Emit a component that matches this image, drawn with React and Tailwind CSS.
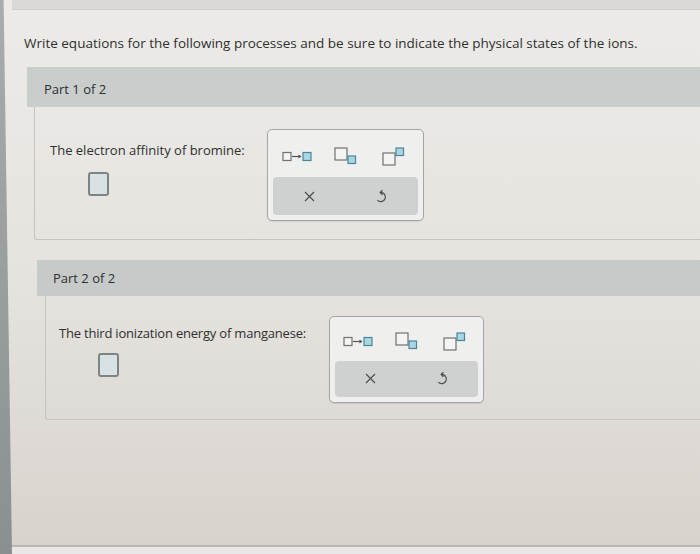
import React from "react";

const font = { fontFamily: '"Open Sans", "Noto Sans", Arial, sans-serif' };

function ArrowIcon() {
  return (
    <svg width="31" height="11" viewBox="0 0 31 11">
      <rect x="1" y="1.5" width="8" height="8" fill="#f4f4f2" stroke="#6d7272" strokeWidth="1.2" />
      <line x1="10" y1="5.5" x2="19" y2="5.5" stroke="#555" strokeWidth="1.2" />
      <path d="M16.5 3.5 L19.5 5.5 L16.5 7.5 Z" fill="#555" />
      <rect x="21" y="1.5" width="8" height="8" fill="#a8d6e4" stroke="#4d8595" strokeWidth="1.2" />
    </svg>
  );
}

function SubIcon() {
  return (
    <svg width="23" height="19" viewBox="0 0 23 19">
      <rect x="1" y="1" width="12" height="12" fill="#f4f4f2" stroke="#6d7272" strokeWidth="1.2" />
      <rect x="14" y="9" width="7.5" height="7.5" fill="#a8d6e4" stroke="#4d8595" strokeWidth="1.2" />
    </svg>
  );
}

function SupIcon() {
  return (
    <svg width="23" height="19" viewBox="0 0 23 19">
      <rect x="1" y="6" width="12" height="12" fill="#f4f4f2" stroke="#6d7272" strokeWidth="1.2" />
      <rect x="14" y="1" width="7.5" height="7.5" fill="#a8d6e4" stroke="#4d8595" strokeWidth="1.2" />
    </svg>
  );
}

function XIcon() {
  return (
    <svg width="13" height="13" viewBox="0 0 13 13">
      <path d="M2 2 L11 11 M11 2 L2 11" stroke="#4a4e4e" strokeWidth="1.2" fill="none" />
    </svg>
  );
}

function UndoIcon() {
  return (
    <svg width="13" height="15" viewBox="0 0 13 15">
      <path d="M5.5 3.5 A4.6 4.6 0 1 1 2.4 11.2" stroke="#4a4e4e" strokeWidth="1.25" fill="none" />
      <path d="M7.4 1.3 L5.2 3.5 L7.4 5.7" stroke="#4a4e4e" strokeWidth="1.25" fill="none" />
    </svg>
  );
}

function Toolbox({ w, h, rowH, grayH }) {
  return (
    <div
      className="shrink-0 rounded-[5px] border border-[#a2a6a6] bg-[#efefed] p-[5px] flex flex-col shadow-[0_1px_1px_rgba(0,0,0,0.08)]"
      style={{ width: w, height: h }}
    >
      <div className="grid grid-cols-3 items-center justify-items-center" style={{ height: rowH }}>
        <ArrowIcon />
        <SubIcon />
        <SupIcon />
      </div>
      <div
        className="mt-auto grid grid-cols-2 items-center justify-items-center rounded-[4px] bg-[#cfd1d0]"
        style={{ height: grayH }}
      >
        <XIcon />
        <UndoIcon />
      </div>
    </div>
  );
}

function InputBox({ ml }) {
  return (
    <div
      className="w-[21px] h-[24px] rounded-[3px] border-2 border-[#7c8484] bg-[#d6e2e4]"
      style={{ marginLeft: ml }}
    />
  );
}

export default function App() {
  return (
    <div
      className="w-[700px] h-[554px] flex overflow-hidden bg-gradient-to-b from-[#ecebe7] via-[#e6e3df] to-[#d7d2cc] text-[#2e3030]"
      style={font}
    >
      <div className="w-[12px] shrink-0 bg-gradient-to-b from-[#a9acac] to-[#8a9092] [clip-path:polygon(0_0,30%_0,100%_100%,0_100%)]" />
      <div className="flex-1 flex flex-col">
        <div className="h-[10px] shrink-0 bg-[#dbd9d5] border-b border-[#d0cecb]" />
        <p className="mt-[24px] ml-[12px] text-[13.5px] leading-[18px] font-medium">
          Write equations for the following processes and be sure to indicate the physical states of the ions.
        </p>

        {/* Part 1 */}
        <div className="mt-[15px] ml-[15px]">
          <div className="h-[40px] bg-[#c9cdcc] pl-[17px] pt-[5px] flex items-center text-[13px] font-medium">
            Part 1 of 2
          </div>
          <div className="ml-[7px] h-[133px] border-l border-b border-[#c4c4c0] rounded-bl-[3px] flex pl-[15px] pt-[22px]">
            <div className="w-[217px] shrink-0 flex flex-col">
              <p className="mt-[12px] text-[13px] leading-[18px] font-medium">The electron affinity of bromine:</p>
              <div className="mt-[13px]">
                <InputBox ml={38} />
              </div>
            </div>
            <Toolbox w={157} h={92} rowH={44} grayH={39} />
          </div>
        </div>

        {/* Part 2 */}
        <div className="mt-[20px] ml-[25px]">
          <div className="h-[36px] bg-[#c6cac9] pl-[16px] pt-[1px] flex items-center text-[13px] font-medium">
            Part 2 of 2
          </div>
          <div className="ml-[8px] h-[124px] border-l border-b border-[#c4c4c0] rounded-bl-[3px] flex pl-[13px] pt-[20px]">
            <div className="w-[270px] shrink-0 flex flex-col">
              <p className="mt-[8px] text-[13px] leading-[18px] font-medium tracking-[-0.2px]">The third ionization energy of manganese:</p>
              <div className="mt-[11px]">
                <InputBox ml={39} />
              </div>
            </div>
            <Toolbox w={155} h={87} rowH={40} grayH={37} />
          </div>
        </div>

        <div className="flex-1" />
        <div className="h-[2px] bg-[#b9b7b3]" />
        <div className="h-[7px] bg-[#e9e8e6]" />
      </div>
    </div>
  );
}
